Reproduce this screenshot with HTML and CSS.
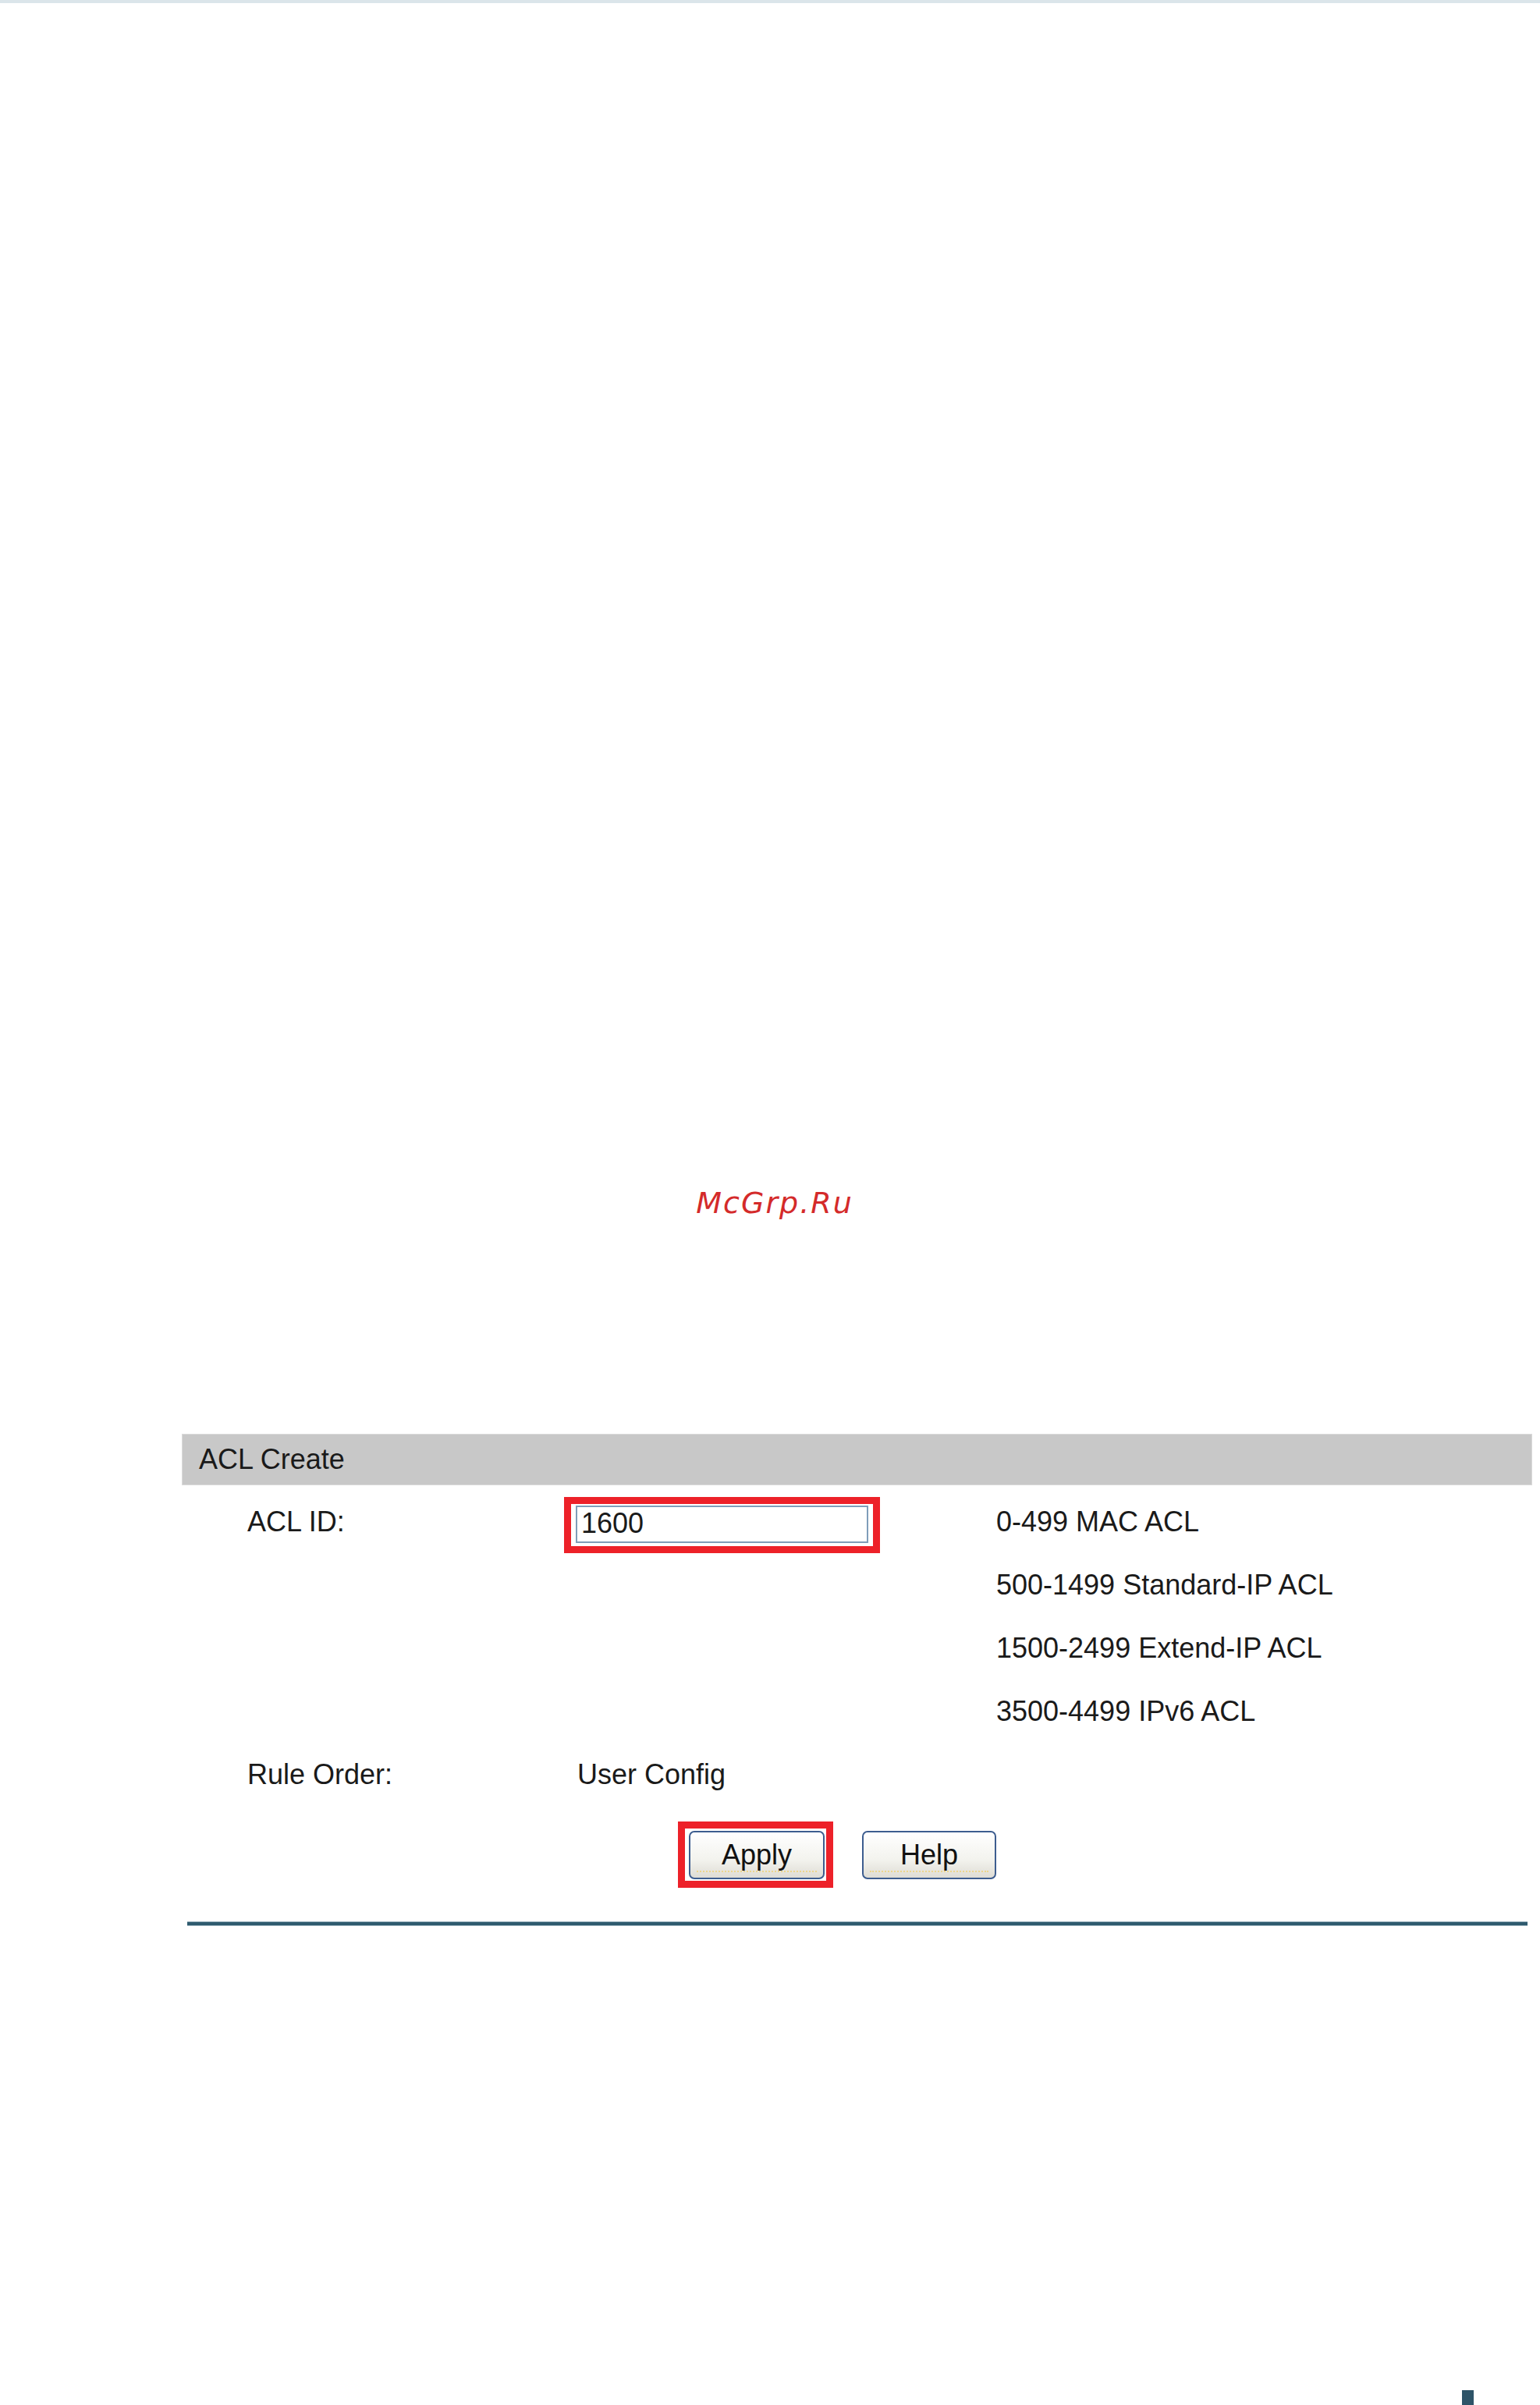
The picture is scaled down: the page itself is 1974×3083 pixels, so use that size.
FILE: index.html
```html
<!DOCTYPE html>
<html>
<head>
	<title>ACL Create</title>
	<meta charset="utf-8">
	<link rel="stylesheet" href="styles.css">
</head>
<body>
  <div class="top-band"></div>
  <div class="watermark">McGrp.Ru</div>

  <div class="content">
    <div class="panel-head">ACL Create</div>
    <div class="form">
      <div class="label">ACL ID:</div>
      <div class="field">
        <div class="mark-box input-mark">
          <input type="text" class="text-input" value="1600">
        </div>
      </div>
      <div class="desc">0-499 MAC ACL</div>

      <div></div><div></div>
      <div class="desc">500-1499 Standard-IP ACL</div>

      <div></div><div></div>
      <div class="desc">1500-2499 Extend-IP ACL</div>

      <div></div><div></div>
      <div class="desc">3500-4499 IPv6 ACL</div>

      <div class="label">Rule Order:</div>
      <div class="field value">User Config</div>
      <div></div>
    </div>

    <div class="actions">
      <div class="mark-box button-mark">
        <button class="btn">Apply</button>
      </div>
      <button class="btn btn-help">Help</button>
    </div>

    <div class="divider"></div>
  </div>

  <div class="page-mark"></div>
</body>
</html>
```

FILE: styles.css
```css
html, body{
	margin: 0;
	padding: 0;
	background: #fff;
}
body{
	width: 1974px;
	height: 3083px;
	overflow: hidden;
	font-family: "Liberation Sans", Arial, sans-serif;
	color: #1a1a1a;
}
.top-band{
	height: 4px;
	background: #dbe5ea;
}
.watermark{
	margin-top: 1519px;
	padding-left: 12px;
	height: 38px;
	line-height: 38px;
	text-align: center;
	font-family: "DejaVu Sans", sans-serif;
	font-style: italic;
	font-size: 38px;
	letter-spacing: 2px;
	color: #d42a2a;
}
.content{
	margin: 277px 10px 0 233px;
}
.panel-head{
	box-sizing: border-box;
	height: 66px;
	line-height: 64px;
	padding-left: 21px;
	background: #c8c8c8;
	border: 1px solid #dadada;
	font-size: 36px;
}
.form{
	display: grid;
	grid-template-columns: 406px 554px 1fr;
	grid-auto-rows: 81px;
	margin-top: 7px;
	padding-left: 84px;
	font-size: 36px;
	line-height: 80px;
}
.value{
	padding-left: 17px;
}
.mark-box{
	box-sizing: border-box;
	border: 9px solid #ed2129;
	background: #fff;
}
.input-mark{
	width: 405px;
	height: 72px;
	margin-top: 8px;
	padding: 2px 6px;
}
.text-input{
	display: block;
	box-sizing: border-box;
	width: 375px;
	height: 48px;
	margin: 0;
	padding: 0 5px 2px;
	border: 2px solid #7f9db9;
	font-family: "Liberation Sans", Arial, sans-serif;
	font-size: 36px;
	color: #1a1a1a;
	outline: none;
}
.actions{
	display: flex;
	align-items: flex-start;
	gap: 37px;
	margin-top: 19px;
	padding-left: 636px;
}
.button-mark{
	width: 199px;
	height: 85px;
	padding: 3px 2px 2px 5px;
}
.btn{
	position: relative;
	box-sizing: border-box;
	width: 174px;
	height: 62px;
	margin: 0;
	padding: 0;
	border: 2px solid #3d5d8f;
	border-radius: 7px;
	background: linear-gradient(#ffffff, #f3f3ee 60%, #dedcd4);
	font-family: "Liberation Sans", Arial, sans-serif;
	font-size: 36px;
	color: #111;
}
.btn::after{
	content: "";
	position: absolute;
	left: 8px;
	right: 8px;
	bottom: 7px;
	border-bottom: 2px dotted #ecd58c;
}
.btn-help{
	width: 172px;
	margin-top: 12px;
}
.divider{
	height: 4px;
	margin: 43px 6px 0 7px;
	background: #2e5a6e;
	border-top: 1px solid #9cb3be;
	border-bottom: 1px solid #9cb3be;
}
.page-mark{
	width: 15px;
	height: 19px;
	margin: 595px 0 0 1874px;
	background: #2e5468;
}
```
